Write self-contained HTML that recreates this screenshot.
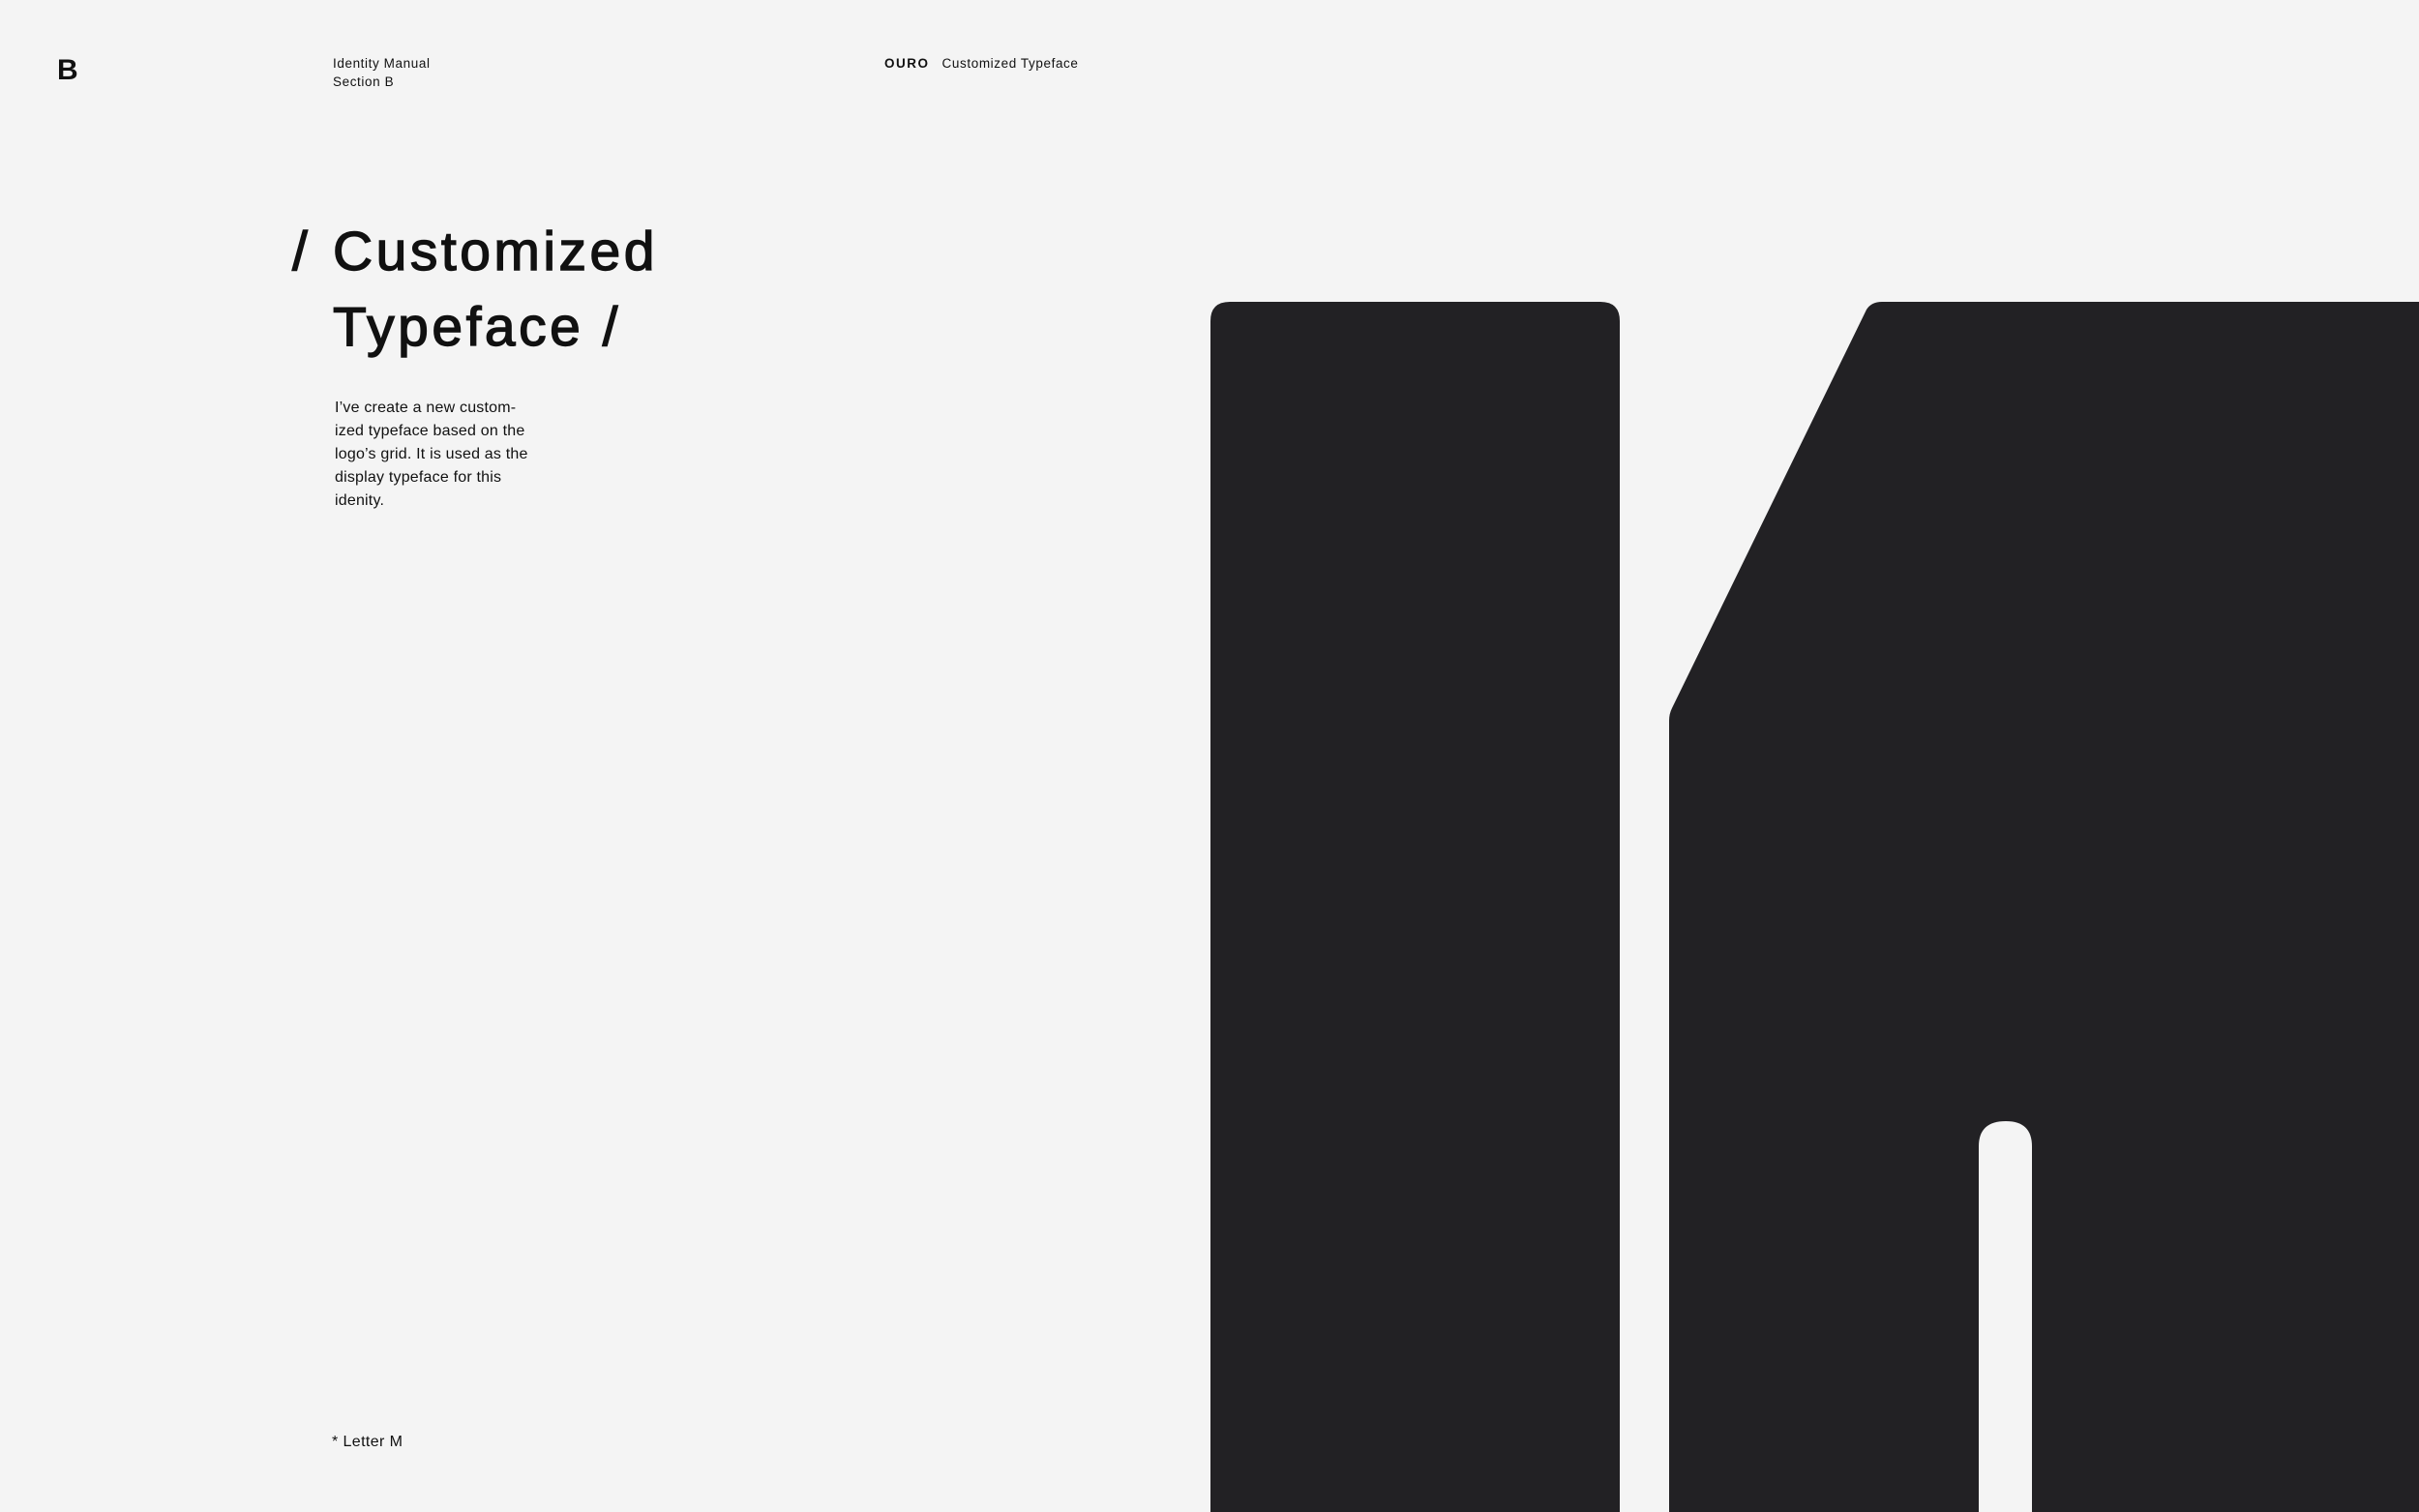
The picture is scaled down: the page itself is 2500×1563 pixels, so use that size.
<!DOCTYPE html>
<html><head><meta charset="utf-8"><style>
html,body{margin:0;padding:0}
body{width:2500px;height:1563px;background:#f4f4f4;position:relative;overflow:hidden;font-family:"Liberation Sans",sans-serif;color:#111}
.a{position:absolute;white-space:nowrap}
</style></head><body>
<div class="a" style="left:59px;top:56px;font-size:30px;font-weight:bold;line-height:34px">B</div>
<div class="a" style="left:344px;top:56px;font-size:13.5px;line-height:19px;letter-spacing:0.6px">Identity Manual<br>Section B</div>
<div class="a" style="left:914px;top:56px;font-size:13.5px;line-height:19px;letter-spacing:0.6px"><b style="letter-spacing:1.5px">OURO</b>&nbsp;&nbsp;&nbsp;Customized Typeface</div>
<div class="a" style="left:302px;top:221px;font-size:57px;line-height:78px;-webkit-text-stroke:1.4px #111">/</div>
<div class="a" style="left:344px;top:221px;font-size:57px;line-height:78px;letter-spacing:3.5px;-webkit-text-stroke:1.4px #111">Customized<br>Typeface /</div>
<div class="a" style="left:346px;top:410px;font-size:16px;line-height:24px;letter-spacing:0.2px">I’ve create a new custom-<br>ized typeface based on the<br>logo’s grid. It is used as the<br>display typeface for this<br>idenity.</div>
<div class="a" style="left:343px;top:1481px;font-size:16px;line-height:20px;letter-spacing:0.4px">* Letter M</div>
<svg class="a" style="left:0;top:0" width="2500" height="1563" viewBox="0 0 2500 1563">
<path fill="#222124" d="M1251 1563 V332 Q1251 312 1271 312 H1654 Q1674 312 1674 332 V1563 Z"/>
<path fill="#222124" d="M1725 1563 V745 Q1725 738 1728 732 L1929 320 Q1934 312 1945 312 H2500 V1563 H2100 V1185 Q2100 1159 2073 1159 Q2045 1159 2045 1185 V1563 Z"/>
</svg>
</body></html>
